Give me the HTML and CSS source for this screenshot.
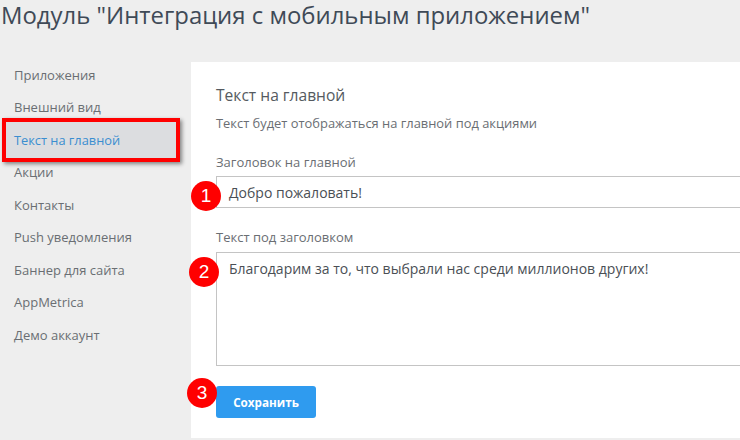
FILE: index.html
```html
<!DOCTYPE html>
<html lang="en">
<head>
    <meta charset="UTF-8">
    <meta name="viewport" content="width=device-width, initial-scale=1.0">
    <title>Модуль</title>
    <link rel="stylesheet" href="styles.css">
</head>
<body>

<h1 class="page-title">Модуль "Интеграция с мобильным приложением"</h1>

<div class="layout">
    <ul class="side-nav">
        <li>Приложения</li>
        <li>Внешний вид</li>
        <li class="active">Текст на главной</li>
        <li>Акции</li>
        <li>Контакты</li>
        <li>Push уведомления</li>
        <li>Баннер для сайта</li>
        <li>AppMetrica</li>
        <li>Демо аккаунт</li>
    </ul>

    <div class="panel">
        <h2>Текст на главной</h2>
        <p class="hint">Текст будет отображаться на главной под акциями</p>

        <div class="field title-field">
            <div class="field-label">Заголовок на главной</div>
            <div class="input">Добро пожаловать!</div>
            <span class="marker marker-one">1</span>
        </div>

        <div class="field">
            <div class="field-label">Текст под заголовком</div>
            <div class="input textarea">Благодарим за то, что выбрали нас среди миллионов других!</div>
            <span class="marker marker-two">2</span>
        </div>

        <div class="actions">
            <button class="save-btn">Сохранить</button>
            <span class="marker marker-three">3</span>
        </div>
    </div>
</div>

</body>
</html>
```

FILE: styles.css
```css
html, body {
    margin: 0;
    height: 440px;
    overflow: hidden;
}
body {
    background-color: #eeeeee;
    font-family: "Open Sans", sans-serif;
    color: #666a70;
}
.page-title {
    margin: 0;
    height: 62px;
    padding-left: 1px;
    font-size: 23.9px;
    line-height: 30px;
    font-weight: 400;
    color: #3f4a57;
}
.layout {
    display: flex;
}
/* Left menu */
.side-nav {
    list-style: none;
    margin: 0;
    padding: 0;
    width: 191px;
    flex-shrink: 0;
}
.side-nav li {
    height: 32.45px;
    line-height: 27px;
    padding-left: 14px;
    font-size: 13px;
    color: #6a6e73;
}
.side-nav li.active {
    position: relative;
    font-size: 12.8px;
    color: #3a8ed0;
}
/* Red annotation frame round the active item */
.side-nav li.active::before {
    content: "";
    position: absolute;
    left: 2px;
    top: -9px;
    width: 170px;
    height: 36px;
    background-color: #dcdde0;
    border: 4px solid #ff0000;
    box-shadow: 2px 2px 4px rgba(0,0,0,0.45);
    z-index: -1;
}
/* Form panel */
.panel {
    flex: 1;
    height: 376px;
    padding: 23px 0 0 25px;
    background-color: #ffffff;
    box-sizing: border-box;
}
.panel h2 {
    margin: 0;
    font-size: 15.6px;
    line-height: 20px;
    font-weight: 400;
    color: #555a60;
}
.hint {
    margin: 9px 0 0;
    font-size: 12.9px;
    line-height: 18px;
    color: #6a6e73;
}
.field {
    position: relative;
    margin-top: 20px;
}
.title-field {
    margin-top: 21px;
}
.field-label {
    font-size: 13px;
    line-height: 18px;
    color: #6a6e73;
}
.input {
    margin-top: 5px;
    height: 32px;
    width: 560px;
    padding: 0 12px;
    box-sizing: border-box;
    border: 1px solid #c4c4c4;
    border-right: 0;
    font-size: 14px;
    line-height: 32px;
    color: #4a4f55;
}
.textarea {
    margin-top: 6px;
    height: 114px;
    line-height: 20px;
    padding-top: 6px;
}
.actions {
    position: relative;
    margin-top: 20px;
}
.save-btn {
    display: block;
    width: 100px;
    height: 32px;
    padding: 0;
    background-color: #2f9bef;
    border: 0;
    border-radius: 3px;
    font-family: inherit;
    font-size: 11.7px;
    font-weight: 700;
    color: #ffffff;
}
/* Numbered red circles laid over the form */
.marker {
    position: absolute;
    width: 30px;
    height: 30px;
    border-radius: 50%;
    background-color: #ff0000;
    color: #ffffff;
    font-family: "Liberation Sans", sans-serif;
    font-size: 19px;
    line-height: 30px;
    text-align: center;
}
.marker-one {
    left: -25px;
    top: 28px;
}
.marker-two {
    left: -27px;
    top: 29px;
}
.marker-three {
    left: -29px;
    top: -8px;
}
```
